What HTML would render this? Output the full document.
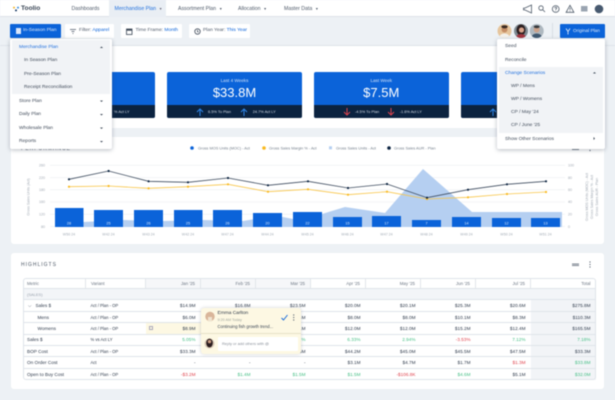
<!DOCTYPE html>
<html><head><meta charset="utf-8"><style>
*{box-sizing:border-box;margin:0;padding:0}
html,body{width:615px;height:400px;overflow:hidden;background:#edf1f5}
body{font-family:"Liberation Sans",sans-serif;color:#36445a;position:relative}
#w{position:absolute;left:0;top:0;width:615px;height:400px;filter:blur(.4px)}
.a{position:absolute;white-space:nowrap}
.p{position:absolute;background:#fff;border-radius:3px}
.n{font-size:5.2px;top:6px;color:#4f5a6a}
.b{position:absolute;top:24px;height:14px;background:#fff;border-radius:1px;font-size:4.9px;line-height:14px;color:#4f5a6a;white-space:nowrap}
.b i{font-style:normal;color:#0b63d9}
.card{position:absolute;top:72px;height:46px;background:#0b63d9;border-radius:2px;overflow:hidden;color:#fff;text-align:center}
.card .t{font-size:4.6px;margin-top:6px;color:#cfe0f8}
.card .v{font-size:13px;line-height:15px;margin-top:2px}
.card .f{position:absolute;left:0;right:0;bottom:0;height:13px;background:#0b2340;font-size:3.9px;line-height:13px;color:#d5dce6}
.card svg{position:absolute;top:3px}
.m{position:absolute;font-size:4.9px;color:#404b5a;white-space:nowrap}
table{position:absolute;left:22.5px;top:278px;width:573px;border-collapse:collapse;table-layout:fixed;font-size:4.7px;color:#2f3b4c}
td,th{border-bottom:.7px solid #dfe4ea;height:11.4px;padding:0 5px;white-space:nowrap;font-weight:normal;overflow:hidden}
td:first-child{padding-left:4.5px}
td:nth-child(2){font-size:4.2px}
th{height:10.6px;color:#6d7784;background:#f6f7f9;text-align:right;border-left:.7px solid #e2e6ea;font-size:4.4px}
th.l{text-align:left;background:#fff}
.r{text-align:right}
.g{color:#45bf85}.e{color:#e0454f}
.to{background:#f2f4f7}
</style></head><body><div id="w">

<div class="p" style="left:0;top:0;width:615px;height:17px;border-radius:0;border-bottom:.7px solid #dde2e8"></div>
<svg class="a" style="left:13px;top:6px" width="7" height="6"><circle cx="1" cy="1.6" r="1" fill="#f2b632"/><circle cx="5" cy="1.6" r="1" fill="#3a8de0"/><circle cx="3" cy="4.4" r="1" fill="#14365f"/></svg>
<div class="a" style="left:21px;top:5px;font-size:6.6px;font-weight:bold;color:#3b4757">Toolio</div>
<div class="a" style="left:109px;top:0;width:57px;height:17px;background:#e9eef4"></div>
<div class="a n" style="left:71.5px">Dashboards</div>
<div class="a n" style="left:114.5px;color:#2472de">Merchandise Plan &nbsp;<span style="font-size:3.5px;color:#667">▼</span></div>
<div class="a n" style="left:178px">Assortment Plan &nbsp;<span style="font-size:3.5px">▼</span></div>
<div class="a n" style="left:238px">Allocation &nbsp;<span style="font-size:3.5px">▼</span></div>
<div class="a n" style="left:284px">Master Data &nbsp;<span style="font-size:3.5px">▼</span></div>

<svg class="a" style="left:520px;top:3px" width="95" height="12" fill="none" stroke="#4e5a69" stroke-width=".8">
<path d="M11.5 2V10L4.5 6.8H3.5V5.2H4.5Z"/>
<circle cx="21" cy="5" r="2.2"/><path d="M22.6 6.6L25 9"/>
<circle cx="35.7" cy="6" r="3.4"/><path d="M34.6 5.1Q34.9 4 35.9 4.1Q37.1 4.4 36.5 5.5Q35.7 6.1 35.7 6.9M35.7 7.7V8.3"/>
<path d="M50 2.3L53.9 9.3H46.1Z"/><path d="M50 4.8V6.9M50 7.6V8.2"/>
<rect x="61" y="3" width="6.5" height="5.5" fill="#9aa4b1" stroke="none"/>
<circle cx="79" cy="6" r="4.3" fill="#47596f" stroke="none"/>
</svg>

<div class="a" style="left:0;top:17px;width:615px;height:29px;background:#edf1f5;border-bottom:.7px solid #dfe4ea"></div>
<div class="b" style="left:10px;width:51px;background:#0b63d9;color:#dfeafa;padding-left:13px"><span style="position:absolute;left:5.5px;top:4px;width:5.5px;height:6px;background:#d9e6fa"></span>In-Season Plan</div>
<div class="b" style="left:64.5px;width:49.5px;padding-left:14.5px"><svg class="a" style="left:5px;top:4.5px" width="7" height="5" stroke="#4e5a69" stroke-width=".8"><path d="M0 .5H6M1.5 2.5H4.5M2.5 4.5H3.5"/></svg>Filter: <i>Apparel</i></div>
<div class="b" style="left:121px;width:61px;padding-left:14.5px"><svg class="a" style="left:5px;top:3.5px" width="7" height="7"><rect x=".5" y="1" width="5.5" height="5.5" fill="none" stroke="#3d4958" stroke-width=".8"/><rect x=".5" y="1" width="5.5" height="1.7" fill="#3d4958"/></svg>Time Frame: <i>Month</i></div>
<div class="b" style="left:189px;width:61px;padding-left:14px"><svg class="a" style="left:5px;top:3.5px" width="7" height="7" fill="none" stroke="#3d4958" stroke-width=".8"><circle cx="3.5" cy="3.5" r="2.7"/><path d="M3.5 2V3.6L4.6 4.2"/></svg>Plan Year: <i>This Year</i></div>

<svg class="a" style="left:497px;top:23px" width="50" height="16">
<defs><clipPath id="c1"><circle cx="7.5" cy="8" r="7"/></clipPath><clipPath id="c2"><circle cx="24" cy="8" r="7"/></clipPath><clipPath id="c3"><circle cx="39.7" cy="8" r="7"/></clipPath></defs>
<g clip-path="url(#c1)"><rect x="0" y="0" width="16" height="16" fill="#e6c59c"/><circle cx="7.5" cy="6.5" r="3" fill="#c58e66"/><ellipse cx="7.5" cy="3.8" rx="3.2" ry="1.6" fill="#3a2a22"/><ellipse cx="7.5" cy="14" rx="5" ry="3.5" fill="#f4f1ec"/></g>
<g clip-path="url(#c2)"><rect x="16" y="0" width="16" height="16" fill="#7f8b93"/><ellipse cx="24" cy="7" rx="4.5" ry="5.5" fill="#2c1f20"/><circle cx="24.5" cy="7" r="2.6" fill="#d9a48c"/><ellipse cx="24" cy="14.5" rx="5" ry="3.5" fill="#a3343f"/></g>
<g clip-path="url(#c3)"><rect x="32" y="0" width="16" height="16" fill="#aeb8c0"/><circle cx="39.7" cy="6.5" r="3" fill="#caa18a"/><ellipse cx="39.7" cy="3.8" rx="3" ry="1.4" fill="#35383c"/><ellipse cx="39.7" cy="14" rx="5" ry="3.5" fill="#3f5870"/></g>
</svg>
<div class="a" style="left:552px;top:23px;width:.7px;height:15px;background:#d9dee4"></div>
<div class="b" style="left:560px;width:45px;background:#0b63d9;color:#dfeafa;padding-left:13px;font-size:4.7px"><svg class="a" style="left:5px;top:3.5px" width="6" height="7" fill="none" stroke="#e5eefb" stroke-width=".8"><path d="M1 .5L3 3.5L5 .5M3 3.5V6.5"/></svg>Original Plan</div>

<div class="p" style="left:11px;top:46px;width:593px;height:82px;border-radius:0"></div>
<div class="p" style="left:11px;top:137px;width:593px;height:107px"></div>
<div class="p" style="left:11px;top:253px;width:593px;height:136px"></div>

<div class="card" style="left:20px;width:135px"><div class="t">This Year</div><div class="v">$275.8M</div><div class="f">&nbsp;</div></div>
<div class="a" style="left:114px;top:109.3px;font-size:3.9px;color:#d5dce6;z-index:1">% Act LY</div>

<div class="card" style="left:167px;width:135px"><div class="t">Last 4 Weeks</div><div class="v">$33.8M</div><div class="f"><svg style="left:29px" width="8" height="8" fill="none" stroke="#2f86e8" stroke-width="1"><path d="M4 8V1M1 4L4 1L7 4"/></svg><svg style="left:73px" width="8" height="8" fill="none" stroke="#2f86e8" stroke-width="1"><path d="M4 8V1M1 4L4 1L7 4"/></svg><span style="position:absolute;left:41px">6.5% To Plan</span><span style="position:absolute;left:85.7px">24.7% Act LY</span></div></div>
<div class="card" style="left:314px;width:134.5px"><div class="t">Last Week</div><div class="v">$7.5M</div><div class="f"><svg style="left:29px" width="8" height="8" fill="none" stroke="#d9434e" stroke-width="1"><path d="M4 0V7M1 4L4 7L7 4"/></svg><svg style="left:73px" width="8" height="8" fill="none" stroke="#d9434e" stroke-width="1"><path d="M4 0V7M1 4L4 7L7 4"/></svg><span style="position:absolute;left:41px">-4.5% To Plan</span><span style="position:absolute;left:85.7px">-1.6% Act LY</span></div></div>
<div class="card" style="left:461px;width:135px"><div class="f"><svg style="left:28px" width="8" height="8" fill="none" stroke="#2f86e8" stroke-width="1"><path d="M4 8V1M1 4L4 1L7 4"/></svg></div></div>

<div class="a" style="left:21px;top:146px;font-size:5px;letter-spacing:1px;color:#4a5564">PERFORMANCE</div>

<svg class="a" style="left:0;top:137px;overflow:visible" width="615" height="107" viewBox="0 137 615 107" font-family="Liberation Sans" font-size="3.6" fill="#a3abb5">
<g stroke="#e7ebef" stroke-width=".5"><path d="M50 165.3H565M50 177.6H565M50 189.8H565M50 202H565M50 214.2H565M50 226.5H565"/></g>
<text x="45" y="166.5" text-anchor="end">260</text><text x="45" y="179" text-anchor="end">220</text><text x="45" y="191" text-anchor="end">180</text><text x="45" y="203" text-anchor="end">160</text><text x="45" y="215.5" text-anchor="end">120</text><text x="45" y="228" text-anchor="end">80</text>
<text x="568" y="166.5">100</text><text x="568" y="179">80</text><text x="568" y="191">60</text><text x="568" y="203">40</text><text x="568" y="215.5">20</text><text x="568" y="228">0</text>
<text transform="translate(29.5 197) rotate(-90)" text-anchor="middle">Gross Sales Units (Act)</text>
<text transform="translate(588 197) rotate(-90)" text-anchor="middle">Gross MOS Units (MOC) - Act</text>
<text transform="translate(593 197) rotate(-90)" text-anchor="middle">Gross Sales Margin % - Act</text>
<text transform="translate(598 197) rotate(-90)" text-anchor="middle">Gross Sales AUR - Plan</text>

<path d="M83 227V222L123 220L163 221L203 220L243 221L267 217L283 217L293 219L322 214L345 207L385 213L423 169L472 212L562 212V227Z" fill="#b5cff1"/>
<g fill="#0b63d9"><rect x="55" y="208" width="28.5" height="19"/><rect x="94" y="210" width="29" height="17"/><rect x="134" y="210" width="29" height="17"/><rect x="174" y="210" width="28.5" height="17"/><rect x="213" y="210" width="29" height="17"/><rect x="253" y="213" width="29" height="14"/><rect x="293" y="212" width="29" height="15"/><rect x="333" y="217" width="29" height="10"/><rect x="372" y="216" width="29" height="11"/><rect x="412" y="220" width="29" height="7"/><rect x="452" y="217" width="29" height="10"/><rect x="492" y="218" width="29" height="9"/><rect x="531" y="218" width="29" height="9"/></g>
<g fill="#dbe8fa" text-anchor="middle" font-size="3.8"><text x="69" y="224.5">28</text><text x="108.5" y="224.5">25</text><text x="148.5" y="224.5">26</text><text x="188" y="224.5">25</text><text x="227.5" y="224.5">26</text><text x="267.5" y="224.5">20</text><text x="307.5" y="224.5">22</text><text x="347.5" y="224.5">15</text><text x="386.5" y="224.5">17</text><text x="426.5" y="224.5">7</text><text x="466.5" y="224.5">14</text><text x="506.5" y="224.5">12</text><text x="545.5" y="224.5">13</text></g>

<path d="M69 186.7L108.6 186L148.6 188.3L188 186.7L228 184.3L268 191.7L308 189.3L348 194.7L387 191.7L427 199L468 197.3L507 194L546 192" fill="none" stroke="#f8c64a" stroke-width=".8"/>
<path d="M69 179.3L108.6 171L148.6 181.3L188 182.3L228 178L268 185.3L308 181.3L348 188L387 184L427 197.7L468 189.7L507 184.3L546 181.3" fill="none" stroke="#3f4d60" stroke-width=".8"/>
<g fill="#f9b91f"><circle cx="69" cy="186.7" r="1.1"/><circle cx="108.6" cy="186" r="1.1"/><circle cx="148.6" cy="188.3" r="1.1"/><circle cx="188" cy="186.7" r="1.1"/><circle cx="228" cy="184.3" r="1.1"/><circle cx="268" cy="191.7" r="1.1"/><circle cx="308" cy="189.3" r="1.1"/><circle cx="348" cy="194.7" r="1.1"/><circle cx="387" cy="191.7" r="1.1"/><circle cx="427" cy="199" r="1.1"/><circle cx="468" cy="197.3" r="1.1"/><circle cx="507" cy="194" r="1.1"/><circle cx="546" cy="192" r="1.1"/></g>
<g fill="#0b2340"><circle cx="69" cy="179.3" r="1.1"/><circle cx="108.6" cy="171" r="1.1"/><circle cx="148.6" cy="181.3" r="1.1"/><circle cx="188" cy="182.3" r="1.1"/><circle cx="228" cy="178" r="1.1"/><circle cx="268" cy="185.3" r="1.1"/><circle cx="308" cy="181.3" r="1.1"/><circle cx="348" cy="188" r="1.1"/><circle cx="387" cy="184" r="1.1"/><circle cx="427" cy="197.7" r="1.1"/><circle cx="468" cy="189.7" r="1.1"/><circle cx="507" cy="184.3" r="1.1"/><circle cx="546" cy="181.3" r="1.1"/></g>
<g text-anchor="middle"><text x="69" y="235.5">W50 24</text><text x="108.5" y="235.5">W42 24</text><text x="148.5" y="235.5">W43 24</text><text x="188" y="235.5">W42 24</text><text x="227.5" y="235.5">W47 24</text><text x="267.5" y="235.5">W44 24</text><text x="307.5" y="235.5">W45 24</text><text x="347.5" y="235.5">W46 24</text><text x="386.5" y="235.5">W47 24</text><text x="426.5" y="235.5">W48 24</text><text x="466.5" y="235.5">W49 24</text><text x="506.5" y="235.5">W50 24</text><text x="545.5" y="235.5">W51 24</text></g>
<g font-size="3.9" fill="#76808d"><circle cx="192" cy="148" r="1.8" fill="#0b63d9"/><text x="198" y="149.3">Gross MOS Units (MOC) - Act</text><circle cx="264" cy="148" r="1.8" fill="#f9b91f"/><text x="269" y="149.3">Gross Sales Margin % - Act</text><rect x="329" y="146.3" width="3" height="3" fill="#b5cff1"/><text x="336" y="149.3">Gross Sales Units - Act</text><circle cx="389" cy="148" r="1.8" fill="#0b2340"/><text x="394" y="149.3">Gross Sales AUR - Plan</text></g>
<path d="M572 148H579M572 149.5H579" stroke="#4e5a69" stroke-width=".7"/><g fill="#4e5a69"><circle cx="590" cy="146.5" r=".6"/><circle cx="590" cy="148.5" r=".6"/><circle cx="590" cy="150.5" r=".6"/></g>
</svg>

<div class="a" style="left:21px;top:262px;font-size:5px;letter-spacing:1px;color:#4a5564">HIGHLIGTS</div>
<svg class="a" style="left:570px;top:260px" width="25" height="10"><path d="M2 4H9M2 5.5H9" stroke="#4e5a69" stroke-width=".7"/><g fill="#4e5a69"><circle cx="20" cy="2" r=".6"/><circle cx="20" cy="4.5" r=".6"/><circle cx="20" cy="7" r=".6"/></g></svg>

<div class="a" style="left:22.5px;top:278px;width:573px;height:102px;border:.7px solid #dfe4ea;border-radius:3px;z-index:1"></div>
<table>
<colgroup><col style="width:63px"><col style="width:60px"><col style="width:55px"><col style="width:55px"><col style="width:55px"><col style="width:55px"><col style="width:55px"><col style="width:55px"><col style="width:55px"><col style="width:65px"></colgroup>
<tr><th class="l" style="border-left:0;padding-left:4.5px">Metric</th><th class="l">Variant</th><th>Jan '25</th><th>Feb '25</th><th>Mar '25</th><th style="background:#fff">Apr '25</th><th style="background:#fff">May '25</th><th style="background:#fff">Jun '25</th><th style="background:#fff">Jul '25</th><th style="background:#fff">Total</th></tr>
<tr style="background:#f3f5f8;color:#9aa3ae;font-size:4px"><td colspan="10">(SALES)</td></tr>
<tr><td style="padding-left:5.5px">⌵ &nbsp;&nbsp;Sales $</td><td>Act / Plan - OP</td><td class="r">$14.9M</td><td class="r">$16.8M</td><td class="r">$23.5M</td><td class="r">$20.0M</td><td class="r">$20.1M</td><td class="r">$25.3M</td><td class="r">$20.6M</td><td class="r to">$275.8M</td></tr>
<tr><td style="padding-left:15px">Mens</td><td>Act / Plan - OP</td><td class="r">$6.0M</td><td class="r">$6.8M</td><td class="r">$9.4M</td><td class="r">$8.0M</td><td class="r">$8.0M</td><td class="r">$10.1M</td><td class="r">$8.3M</td><td class="r to">$110.3M</td></tr>
<tr><td style="padding-left:15px">Womens</td><td>Act / Plan - OP</td><td class="r" style="background:#fdf8e3">$8.9M</td><td class="r">$10.0M</td><td class="r">$14.1M</td><td class="r">$12.0M</td><td class="r">$12.0M</td><td class="r">$15.2M</td><td class="r">$12.4M</td><td class="r to">$165.5M</td></tr>
<tr><td>Sales $</td><td>% vs Act LY</td><td class="r g">5.05%</td><td class="r g">4.1%</td><td class="r g">6.2%</td><td class="r g">6.33%</td><td class="r g">2.94%</td><td class="r e">-3.53%</td><td class="r g">7.12%</td><td class="r to g">7.18%</td></tr>
<tr><td>BOP Cost</td><td>Act / Plan - OP</td><td class="r">$33.3M</td><td class="r">$38.2M</td><td class="r">$41.5M</td><td class="r">$44.2M</td><td class="r">$45.0M</td><td class="r">$45.5M</td><td class="r">$47.5M</td><td class="r to">$33.3M</td></tr>
<tr><td>On Order Cost</td><td>Act</td><td class="r">-</td><td class="r">-</td><td class="r">-</td><td class="r">$3.1M</td><td class="r">$4.7M</td><td class="r">$1.7M</td><td class="r e">$1.3M</td><td class="r to g">$33.8M</td></tr>
<tr><td style="border:0">Open to Buy Cost</td><td style="border:0">Act / Plan - OP</td><td class="r e" style="border:0">-$3.2M</td><td class="r g" style="border:0">$1.4M</td><td class="r g" style="border:0">$1.5M</td><td class="r g" style="border:0">$1.5M</td><td class="r e" style="border:0">-$106.8K</td><td class="r g" style="border:0">$4.6M</td><td class="r" style="border:0">$5.1M</td><td class="r to g" style="border:0">$32.0M</td></tr>
</table>
<div class="a" style="left:149px;top:326px;width:4px;height:4px;border:.6px solid #aab;z-index:2"></div>

<div class="a" style="left:201px;top:308px;width:100px;height:46px;background:#fdf8e3;border-radius:3px;box-shadow:0 0 3px rgba(60,70,90,.25);z-index:3">
<svg class="a" style="left:4px;top:3px" width="10" height="11"><circle cx="5" cy="5.5" r="4.7" fill="#d9b59a"/><rect x="3" y="6" width="4" height="4.5" fill="#f0e4d0"/></svg>
<div class="a" style="left:16.5px;top:3px;font-size:4.8px;color:#2c3847">Emma Carlton</div>
<div class="a" style="left:16.5px;top:10px;font-size:3.7px;color:#a2a79f">9:20 AM Today</div>
<div class="a" style="left:16.5px;top:16px;font-size:4.2px;color:#3b4655">Continuing fish growth trend...</div>
<svg class="a" style="left:80px;top:6px" width="16" height="8"><path d="M.5 4L2.5 6L6.5 1" fill="none" stroke="#0b63d9" stroke-width=".9"/><g fill="#4e5a69"><circle cx="12.7" cy="1" r=".6"/><circle cx="12.7" cy="3.5" r=".6"/><circle cx="12.7" cy="6" r=".6"/></g></svg>
<div class="a" style="left:0;top:25px;width:100px;height:.7px;background:#e7e1c8"></div>
<svg class="a" style="left:3px;top:30px" width="11" height="11"><circle cx="5.5" cy="5.5" r="5" fill="#d8c9b5"/><ellipse cx="5.5" cy="5" rx="3.3" ry="4.4" fill="#2a1c1e"/><circle cx="5.5" cy="3.6" r="1.7" fill="#c99a80"/></svg>
<div class="a" style="left:17px;top:29px;width:80px;height:13.5px;background:#fff;border-radius:1px;font-size:3.9px;line-height:13px;color:#8b919b;padding-left:4px">Reply or add others with @</div>
</div>

<div class="a" style="left:10px;top:39px;width:102px;height:110px;background:#fff;border-radius:2px;box-shadow:0 1px 4px rgba(50,60,80,.35);z-index:4">
<div class="a" style="left:2px;top:1px;width:98px;height:54px;background:#f1f3f6"></div>
<div class="m" style="left:9px;top:5.5px;color:#2472de">Merchandise Plan</div>
<div class="m" style="left:14px;top:19px">In Season Plan</div>
<div class="m" style="left:14px;top:32.5px">Pre-Season Plan</div>
<div class="m" style="left:14px;top:46px">Receipt Reconciliation</div>
<div class="m" style="left:9px;top:59.5px">Store Plan</div>
<div class="m" style="left:9px;top:73px">Daily Plan</div>
<div class="m" style="left:9px;top:86.5px">Wholesale Plan</div>
<div class="m" style="left:9px;top:100px">Reports</div>
<svg class="a" style="left:89px;top:6px" width="5" height="100" fill="#3f4b5a"><path d="M1 3L2.5 1.5L4 3Z"/><path d="M1 55.5H4L2.5 57Z"/><path d="M1 69H4L2.5 70.5Z"/><path d="M1 82.5H4L2.5 84Z"/><path d="M1 96H4L2.5 97.5Z"/></svg>
</div>

<div class="a" style="left:497px;top:39px;width:108px;height:110px;background:#fff;border-radius:2px;box-shadow:0 1px 4px rgba(50,60,80,.35);z-index:4">
<div class="a" style="left:2px;top:28.3px;width:104px;height:65.7px;background:#f1f3f6"></div>
<div class="m" style="left:8px;top:5.3px">Seed</div>
<div class="m" style="left:8px;top:19px">Reconcile</div>
<div class="m" style="left:8px;top:32.2px;color:#2472de">Change Scenarios</div>
<div class="m" style="left:14px;top:45.2px">WP / Mens</div>
<div class="m" style="left:14px;top:58.2px">WP / Womens</div>
<div class="m" style="left:14px;top:71.2px">CP / May '24</div>
<div class="m" style="left:14px;top:84.2px">CP / June '25</div>
<div class="m" style="left:8px;top:98.2px">Show Other Scenarios</div>
<svg class="a" style="left:95px;top:31px" width="5" height="72" fill="#3f4b5a"><path d="M1 3.5L2.5 2L4 3.5Z"/><path d="M1.5 67L3 68.5L1.5 70Z"/></svg>
</div>

</div></body></html>
